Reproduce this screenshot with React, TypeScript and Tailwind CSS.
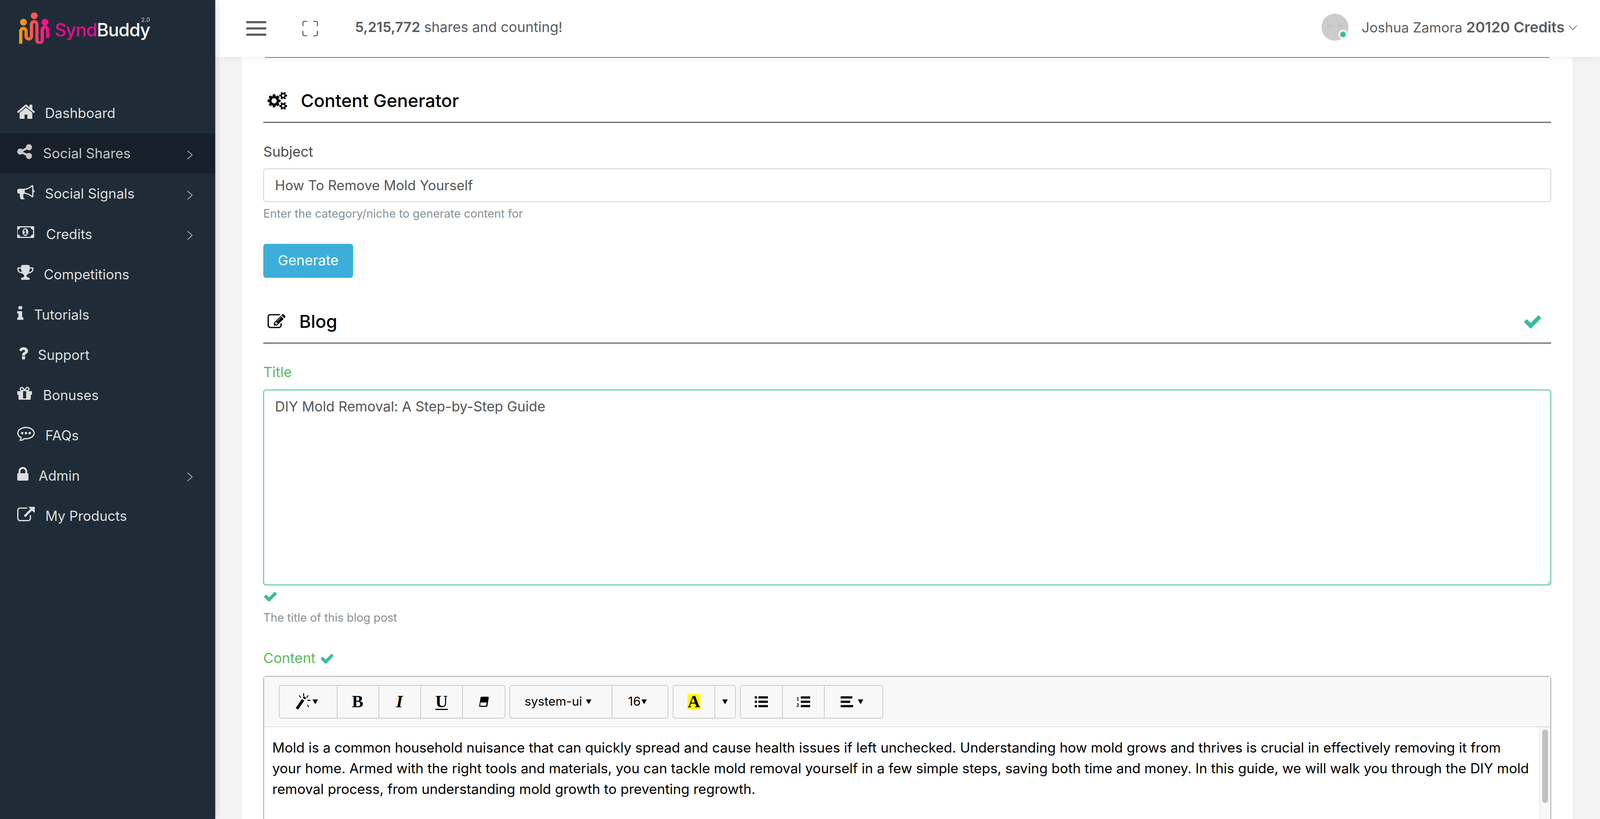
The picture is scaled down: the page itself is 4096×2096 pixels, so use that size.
import type { ReactNode } from "react";

const FONT = "font-['Inter','Liberation_Sans',sans-serif]";

const ICONS = {
  home: "M1472 992v480q0 26-19 45t-45 19h-384v-384h-256v384h-384q-26 0-45-19t-19-45v-480q0-1 .5-3t.5-3l575-474 575 474q1 2 1 6zm223-69l-62 74q-8 9-21 11h-3q-13 0-21-7l-692-577-692 577q-12 8-24 7-13-2-21-11l-62-74q-8-10-7-23.5t11-21.5l719-599q32-26 76-26t76 26l244 204v-195q0-14 9-23t23-9h192q14 0 23 9t9 23v408l219 182q10 8 11 21.5t-7 23.5z",
  share: "M1344 1024q133 0 226.5 93.5t93.5 226.5-93.5 226.5-226.5 93.5-226.5-93.5-93.5-226.5q0-12 2-34l-360-180q-92 86-218 86-133 0-226.5-93.5t-93.5-226.5 93.5-226.5 226.5-93.5q126 0 218 86l360-180q-2-22-2-34 0-133 93.5-226.5t226.5-93.5 226.5 93.5 93.5 226.5-93.5 226.5-226.5 93.5q-126 0-218-86l-360 180q2 22 2 34t-2 34l360 180q92-86 218-86z",
  bullhorn: "M1664 704q53 0 90.5 37.5t37.5 90.5-37.5 90.5-90.5 37.5v384q0 52-38 90t-90 38q-417-347-812-380-58 19-91 66t-31 100.5 40 92.5q-20 33-23 65.5t6 58 33.5 55 48 50 61.5 50.5q-29 58-111.5 83t-168.5 11.5-132-55.5q-7-23-29.5-87.5t-32-94.5-23-89-15-101 3.5-98.5 22-110.5h-122q-66 0-113-47t-47-113v-192q0-66 47-113t113-47h480q435 0 896-384 52 0 90 38t38 90v384zm-128 604v-954q-394 302-768 343v270q377 42 768 341z",
  money: "M704 1152h384v-96h-128v-448h-114l-148 137 77 80q42-37 55-57h2v288h-128v96zm512-256q0 70-21 142t-59.5 134-101.5 101-138 39-138-39-101.5-101-59.5-134-21-142 21-142 59.5-134 101.5-101 138-39 138 39 101.5 101 59.5 134 21 142zm512 256v-512q-106 0-181-75t-75-181h-1152q0 106-75 181t-181 75v512q106 0 181 75t75 181h1152q0-106 75-181t181-75zm128-832v1152q0 26-19 45t-45 19h-1792q-26 0-45-19t-19-45v-1152q0-26 19-45t45-19h1792q26 0 45 19t19 45z",
  trophy: "M522 883q-74-162-74-371h-256v96q0 78 94.5 162t235.5 113zm1078-275v-96h-256q0 209-74 371 141-29 235.5-113t94.5-162zm128-128v128q0 71-41.5 143t-112 130-173 97.5-215.5 44.5q-42 54-95 95-38 34-52.5 72.5t-14.5 89.5q0 54 30.5 91t97.5 37q75 0 133.5 45.5t58.5 114.5v64q0 14-9 23t-23 9h-832q-14 0-23-9t-9-23v-64q0-69 58.5-114.5t133.5-45.5q67 0 97.5-37t30.5-91q0-51-14.5-89.5t-52.5-72.5q-53-41-95-95-113-5-215.5-44.5t-173-97.5-112-130-41.5-143v-128q0-40 28-68t68-28h288v-96q0-66 47-113t113-47h576q66 0 113 47t47 113v96h288q40 0 68 28t28 68z",
  info: "M1216 1344v128q0 26-19 45t-45 19h-512q-26 0-45-19t-19-45v-128q0-26 19-45t45-19h64v-384h-64q-26 0-45-19t-19-45v-128q0-26 19-45t45-19h384q26 0 45 19t19 45v576h64q26 0 45 19t19 45zm-128-1152v192q0 26-19 45t-45 19h-256q-26 0-45-19t-19-45v-192q0-26 19-45t45-19h256q26 0 45 19t19 45z",
  question: "M1088 1256v240q0 16-12 28t-28 12h-240q-16 0-28-12t-12-28v-240q0-16 12-28t28-12h240q16 0 28 12t12 28zm316-600q0 54-15.5 101t-35 76.5-55 59.5-57.5 43.5-61 35.5q-41 23-68.5 65t-27.5 67q0 17-12 32.5t-28 15.5h-240q-15 0-25.5-18.5t-10.5-37.5v-45q0-83 65-156.5t143-108.5q59-27 84-56t25-76q0-42-46.5-74t-107.5-32q-65 0-108 29-35 25-107 115-13 16-31 16-12 0-25-8l-164-125q-13-10-15.5-25t5.5-28q160-266 464-266 80 0 161 31t146 83 106 127.5 41 158.5z",
  gift: "M1056 1356v-716h-320v716q0 25 18 38.5t46 13.5h192q28 0 46-13.5t18-38.5zm-456-844h195l-126-161q-26-31-69-31-40 0-68 28t-28 68 28 68 68 28zm688-96q0-40-28-68t-68-28q-43 0-69 31l-125 161h194q40 0 68-28t28-68zm376 256v320q0 14-9 23t-23 9h-96v416q0 40-28 68t-68 28h-1088q-40 0-68-28t-28-68v-416h-96q-14 0-23-9t-9-23v-320q0-14 9-23t23-9h440q-93 0-158.5-65.5t-65.5-158.5 65.5-158.5 158.5-65.5q107 0 168 77l128 165 128-165q61-77 168-77 93 0 158.5 65.5t65.5 158.5-65.5 158.5-158.5 65.5h440q14 0 23 9t9 23z",
  comment: "M640 896q0 53-37.5 90.5t-90.5 37.5-90.5-37.5-37.5-90.5 37.5-90.5 90.5-37.5 90.5 37.5 37.5 90.5zm384 0q0 53-37.5 90.5t-90.5 37.5-90.5-37.5-37.5-90.5 37.5-90.5 90.5-37.5 90.5 37.5 37.5 90.5zm384 0q0 53-37.5 90.5t-90.5 37.5-90.5-37.5-37.5-90.5 37.5-90.5 90.5-37.5 90.5 37.5 37.5 90.5zm-512-512q-204 0-381.5 69.5t-282 187.5-104.5 255q0 112 71.5 213.5t201.5 175.5l87 50-27 96q-24 91-70 172 152-63 275-171l43-38 57 6q69 8 130 8 204 0 381.5-69.5t282-187.5 104.5-255-104.5-255-282-187.5-381.5-69.5zm896 512q0 174-120 321.5t-326 233-450 85.5q-70 0-145-8-198 175-460 242-49 14-114 22h-5q-15 0-27-10.5t-16-27.5v-1q-3-4-.5-12t2-10 4.5-9.5l6-9 7-8.5 8-9q7-8 31-34.5t34.5-38 31-39.5 32.5-51 27-59 26-76q-157-89-247.5-220t-90.5-281q0-174 120-321.5t326-233 450-85.5 450 85.5 326 233 120 321.5z",
  lock: "M640 768h512v-192q0-106-75-181t-181-75-181 75-75 181v192zm832 96v576q0 40-28 68t-68 28h-960q-40 0-68-28t-28-68v-576q0-40 28-68t68-28h32v-192q0-184 132-316t316-132 316 132 132 316v192h32q40 0 68 28t28 68z",
  external: "M1408 928v320q0 119-84.5 203.5t-203.5 84.5h-832q-119 0-203.5-84.5t-84.5-203.5v-832q0-119 84.5-203.5t203.5-84.5h704q14 0 23 9t9 23v64q0 14-9 23t-23 9h-704q-66 0-113 47t-47 113v832q0 66 47 113t113 47h832q66 0 113-47t47-113v-320q0-14 9-23t23-9h64q14 0 23 9t9 23zm384-864v512q0 26-19 45t-45 19-45-19l-176-176-652 652q-10 10-23 10t-23-10l-114-114q-10-10-10-23t10-23l652-652-176-176q-19-19-19-45t19-45 45-19h512q26 0 45 19t19 45z",
  cogs: "M896 896q0-106-75-181t-181-75-181 75-75 181 75 181 181 75 181-75 75-181zm768 512q0-52-38-90t-90-38-90 38-38 90q0 53 37.5 90.5t90.5 37.5 90.5-37.5 37.5-90.5zm0-1024q0-52-38-90t-90-38-90 38-38 90q0 53 37.5 90.5t90.5 37.5 90.5-37.5 37.5-90.5zm-384 421v185q0 10-7 19.5t-16 10.5l-155 24q-11 35-32 76 34 48 90 115 7 11 7 20 0 12-7 19-23 30-82.5 89.5t-78.5 59.5q-11 0-21-7l-115-90q-37 19-77 31-11 108-23 155-7 24-30 24h-186q-11 0-20-7.5t-10-17.5l-23-153q-34-10-75-31l-118 89q-7 7-20 7-11 0-21-8-144-133-144-160 0-9 7-19 10-14 41-53t47-61q-23-44-35-82l-152-24q-10-1-17-9.5t-7-19.5v-185q0-10 7-19.5t16-10.5l155-24q11-35 32-76-34-48-90-115-7-11-7-19 0-12 7-20 22-30 82-89t79-59q11 0 21 7l115 90q34-18 77-32 11-108 23-154 7-24 30-24h186q11 0 20 7.5t10 17.5l23 153q34 10 75 31l118-89q8-7 20-7 11 0 21 8 144 133 144 160 0 8-7 19-12 16-42 54t-45 60q23 48 34 82l152 23q10 2 17 10.5t7 19.5zm640 533v140q0 16-149 31-12 27-30 52 51 113 51 138 0 4-4 7-122 71-124 71-8 0-46-47t-52-68q-20 2-30 2t-30-2q-14 21-52 68t-46 47q-2 0-124-71-4-3-4-7 0-25 51-138-18-25-30-52-149-15-149-31v-140q0-16 149-31 13-29 30-52-51-113-51-138 0-4 4-7 4-2 35-20t59-34 30-16q8 0 46 46.5t52 67.5q20-2 30-2t30 2q51-71 92-112l6-2q4 0 124 70 4 3 4 7 0 25-51 138 17 23 30 52 149 15 149 31zm0-1024v140q0 16-149 31-12 27-30 52 51 113 51 138 0 4-4 7-122 71-124 71-8 0-46-47t-52-68q-20 2-30 2t-30-2q-14 21-52 68t-46 47q-2 0-124-71-4-3-4-7 0-25 51-138-18-25-30-52-149-15-149-31v-140q0-16 149-31 13-29 30-52-51-113-51-138 0-4 4-7 4-2 35-20t59-34 30-16q8 0 46 46.5t52 67.5q20-2 30-2t30 2q51-71 92-112l6-2q4 0 124 70 4 3 4 7 0 25-51 138 17 23 30 52 149 15 149 31z",
  edit: "M888 1184l116-116-152-152-116 116v56h96v96h56zm440-720q-16-16-33 1l-350 350q-17 17-1 33t33-1l350-350q17-17 1-33zm80 594v190q0 119-84.5 203.5t-203.5 84.5h-832q-119 0-203.5-84.5t-84.5-203.5v-832q0-119 84.5-203.5t203.5-84.5h832q63 0 117 25 15 7 18 23 3 17-9 29l-49 49q-14 14-32 8-23-6-45-6h-832q-66 0-113 47t-47 113v832q0 66 47 113t113 47h832q66 0 113-47t47-113v-126q0-13 9-22l64-64q15-15 35-7t20 29zm-96-738l288 288-672 672h-288v-288zm444 132l-92 92-288-288 92-92q28-28 68-28t68 28l152 152q28 28 28 68t-28 68z",
  check: "M1671 566q0 40-28 68l-724 724-136 136q-28 28-68 28t-68-28l-136-136-362-362q-28-28-28-68t28-68l136-136q28-28 68-28t68 28l294 295 656-657q28-28 68-28t68 28l136 136q28 28 28 68z",
};

function Fa({ d, vb, className }: { d: string; vb: string; className: string }) {
  return (
    <svg viewBox={vb} className={className} preserveAspectRatio="xMidYMid meet" fill="currentColor">
      <path d={d} />
    </svg>
  );
}

function Chevron() {
  return (
    <svg viewBox="0 0 16 25" className="ml-auto mr-[57px] mt-[7px] h-[23px] w-[15px] text-[#d8d8d8]" fill="none" stroke="currentColor" strokeWidth="1.7">
      <path d="M1 1l13 11.5L1 24" />
    </svg>
  );
}

const NAV = [
  { label: "Dashboard", d: ICONS.home, vb: "96 224 1600 1312", box: "w-[71px]", size: "w-[45px] h-[37px]" },
  { label: "Social Shares", d: ICONS.share, vb: "128 128 1536 1536", box: "w-[66px]", size: "w-[38px] h-[38px]", arrow: true, active: true },
  { label: "Social Signals", d: ICONS.bullhorn, vb: "0 128 1792 1536", box: "w-[71px]", size: "w-[45px] h-[38px]", arrow: true },
  { label: "Credits", d: ICONS.money, vb: "0 256 2048 1280", box: "w-[74px]", size: "w-[48px] h-[32px]", arrow: true },
  { label: "Competitions", d: ICONS.trophy, vb: "64 128 1664 1536", box: "w-[68px]", size: "w-[42px] h-[38px]" },
  { label: "Tutorials", d: ICONS.info, vb: "576 128 640 1408", box: "w-[43px]", size: "w-[16px] h-[36px]" },
  { label: "Support", d: ICONS.question, vb: "384 256 1024 1280", box: "w-[53px] pl-[3px]", size: "w-[25px] h-[32px]" },
  { label: "Bonuses", d: ICONS.gift, vb: "128 192 1536 1344", box: "w-[66px]", size: "w-[38px] h-[33px]" },
  { label: "FAQs", d: ICONS.comment, vb: "0 256 1792 1408", box: "w-[72px]", size: "w-[45px] h-[36px]" },
  { label: "Admin", d: ICONS.lock, vb: "320 128 1152 1408", box: "w-[55px]", size: "w-[29px] h-[35px]", arrow: true },
  { label: "My Products", d: ICONS.external, vb: "0 64 1792 1472", box: "w-[72px]", size: "w-[45px] h-[37px]" },
];

function Logo() {
  return (
    <div className="flex h-[145.5px] items-center border-b border-[#1b2833] pl-[49px]">
      <svg viewBox="53 36 86 87" className="h-[80px] w-[79px] shrink-0">
        <defs>
          <linearGradient id="logoWave" x1="0" y1="0" x2="1" y2="0">
            <stop offset="0" stopColor="#ff9a00" />
            <stop offset="0.5" stopColor="#fb4a5c" />
            <stop offset="1" stopColor="#f10a90" />
          </linearGradient>
        </defs>
        <circle cx="65" cy="63" r="9.5" fill="#ff9410" />
        <circle cx="95" cy="45" r="9.5" fill="#fb5a4c" />
        <circle cx="125" cy="63" r="9.5" fill="#f5178a" />
        <path
          d="M57.5 123V88a7.5 7.5 0 0 1 15 0v14a7.5 7.5 0 0 0 15 0V69a7.5 7.5 0 0 1 15 0v44a7.5 7.5 0 0 0 15 0V84a7.5 7.5 0 0 1 15 0v23"
          fill="none"
          stroke="url(#logoWave)"
          strokeWidth="9"
        />
      </svg>
      <div className="relative ml-[12px] mt-[7px] text-[46px] font-medium leading-none tracking-[-1.1px]">
        <span className="text-[#ec0a8e]">Synd</span>
        <span className="text-white">Buddy</span>
        <span className="absolute bottom-[calc(100%-5px)] right-[0px] text-[15px] font-normal leading-none tracking-normal text-[#c9c9c9]">2.0</span>
      </div>
    </div>
  );
}

function Sidebar() {
  return (
    <aside className="z-20 flex h-full w-[550.7px] shrink-0 flex-col bg-[#1f2c38] shadow-[4px_0_14px_rgba(0,0,0,0.12)]">
      <Logo />
      <nav className="mt-[92.5px]">
        {NAV.map((item) => (
          <div
            key={item.label}
            className={`flex h-[103.1px] items-center pl-[44px] text-[35px] ${item.active ? "bg-[#172028] text-[#c6c6c6]" : "text-[#dedede]"}`}
          >
            <span className={`mb-[9px] flex shrink-0 ${item.box}`}>
              <Fa d={item.d} vb={item.vb} className={item.size} />
            </span>
            <span>{item.label}</span>
            {item.arrow && <Chevron />}
          </div>
        ))}
      </nav>
    </aside>
  );
}

function TopBar() {
  return (
    <header className="z-10 flex h-[145.5px] shrink-0 items-center bg-white pl-[79px] pr-[58px] text-[#585c60] shadow-[0_2px_16px_rgba(0,0,0,0.07)]">
      <svg viewBox="0 0 52 38" className="h-[38px] w-[52px]" fill="currentColor">
        <rect y="0" width="52" height="5.5" rx="2.7" />
        <rect y="16" width="52" height="5.5" rx="2.7" />
        <rect y="32" width="52" height="5.5" rx="2.7" />
      </svg>
      <svg viewBox="0 0 40 40" className="ml-[92px] h-[40px] w-[40px]" fill="none" stroke="currentColor" strokeWidth="2.6" strokeLinecap="round">
        <path d="M1.5 13V5a3.5 3.5 0 0 1 3.500-3.500h6M38.500 13V5a3.500 3.500 0 0 0-3.500-3.500h-6M1.500 27v8a3.500 3.500 0 0 0 3.500 3.500h6M38.500 27v8a3.500 3.500 0 0 1-3.500 3.500h-6" />
      </svg>
      <div className="mb-[5px] ml-[95px] text-[35.8px]">
        <b className="font-semibold">5,215,772</b> shares and counting!
      </div>
      <div className="mb-[6px] ml-auto flex items-center">
        <div className="relative flex h-[69px] w-[69px] items-center justify-center rounded-full bg-[#cccccc] text-[10px] text-[#b4b4b4]">
          <span className="mb-[4px]">114 x 113</span>
          <span className="absolute bottom-[4px] right-[2px] h-[24px] w-[24px] rounded-full border-[5px] border-[#eeeeee] bg-[#36bd9b]" />
        </div>
        <div className="ml-[34px] text-[35.2px]">
          Joshua Zamora <b className="text-[37.4px] font-semibold">20120 Credits</b>
        </div>
        <svg viewBox="0 0 24 15" className="ml-[10px] mt-[2px] h-[14px] w-[23px]" fill="none" stroke="currentColor" strokeWidth="1.7">
          <path d="M1 1l11 12L23 1" />
        </svg>
      </div>
    </header>
  );
}

function SectionTitle({ icon, title, right }: { icon: ReactNode; title: string; right?: ReactNode }) {
  return (
    <div className="flex h-[110px] items-center border-b-[2px] border-[#1f2c38] pl-[11px] pr-[26px] text-black">
      {icon}
      <h4 className="text-[45.7px] font-medium leading-none">{title}</h4>
      {right && <div className="ml-auto">{right}</div>}
    </div>
  );
}

function Caret({ className = "" }: { className?: string }) {
  return (
    <svg viewBox="0 0 16 16" className={`h-[14px] w-[14px] shrink-0 ${className}`} fill="#000">
      <path d="M0 1h16L8 15z" />
    </svg>
  );
}

function Cell({ children, className }: { children?: ReactNode; className: string }) {
  return <div className={`flex h-full items-center justify-center border-r-[2.5px] border-[#cccccc] last:border-r-0 ${className}`}>{children}</div>;
}

function Group({ children }: { children: ReactNode }) {
  return <div className="flex h-[86px] rounded-[7px] border-[2.5px] border-[#cccccc]">{children}</div>;
}

function Toolbar() {
  return (
    <div className="flex h-[129px] items-start gap-[10.5px] border-b-[2.5px] border-[#dddddd] bg-[#f8f8f8] pl-[38px] pt-[21px]">
      <Group>
        <Cell className="w-[148px] pr-[8px]">
          <svg viewBox="0 0 40 44" className="mr-[2px] h-[44px] w-[42px]" fill="#000">
            <path d="M0 38l16-23 6 4-16 23zM18 12l3-4 6 4-3 4z" />
            <rect x="19" y="0" width="2.500" height="8" />
            <rect x="30" y="17" width="8" height="2.500" />
            <path d="M8 6l2-1 4 6-2 1zM31 5l2 1-4 6-2-1zM29 30l2-1 3 6-2 1z" />
          </svg>
          <Caret />
        </Cell>
        <Cell className="w-[107px] pr-[2px] font-['Liberation_Serif',serif] text-[44px] font-bold text-black">B</Cell>
        <Cell className="w-[107px] pr-[2px] font-['Liberation_Serif',serif] text-[44px] font-bold italic text-black">I</Cell>
        <Cell className="w-[107px] font-['Liberation_Serif',serif] text-[44px] font-bold text-black underline decoration-[3px] underline-offset-[4px]">U</Cell>
        <Cell className="w-[107px]">
          <svg viewBox="0 0 28 30" className="h-[28px] w-[27px]">
            <path d="M8 1h17q3 0 2.500 3l-3.500 22q-.5 3-3.500 3H4q-3 0-2.500-3L5 4q.5-3 3-3z" fill="#000" />
            <path d="M5 17h17l-1.500 9H4z" fill="#f8f8f8" />
          </svg>
        </Cell>
      </Group>
      <Group>
        <Cell className="w-[262px] pr-[16px] text-[31.4px] text-black">
          system-ui
          <Caret className="ml-[10px]" />
        </Cell>
        <Cell className="w-[141px] pr-[14px] text-[31.4px] text-black">
          16
          <Caret className="ml-[2px]" />
        </Cell>
      </Group>
      <Group>
        <Cell className="w-[107px]">
          <span className="flex h-[39px] w-[33px] items-center justify-center bg-[#ffff00] font-['Liberation_Serif',serif] text-[44px] font-bold leading-none text-black">A</span>
        </Cell>
        <Cell className="w-[51px]">
          <Caret />
        </Cell>
      </Group>
      <Group>
        <Cell className="w-[108px]">
          <svg viewBox="0 0 36 30" className="h-[28px] w-[34px]" fill="#000">
            <rect x="0" y="0" width="6" height="6" />
            <rect x="10" y="0" width="26" height="6" />
            <rect x="0" y="12" width="6" height="6" />
            <rect x="10" y="12" width="26" height="6" />
            <rect x="0" y="24" width="6" height="6" />
            <rect x="10" y="24" width="26" height="6" />
          </svg>
        </Cell>
        <Cell className="w-[107px]">
          <svg viewBox="0 0 38 30" className="h-[28px] w-[35px]" fill="#000">
            <text x="0" y="12" fontSize="13" fontFamily="Liberation Sans" fontWeight="700">1</text>
            <text x="0" y="29" fontSize="13" fontFamily="Liberation Sans" fontWeight="700">2</text>
            <rect x="12" y="0" width="26" height="6" />
            <rect x="12" y="12" width="26" height="6" />
            <rect x="12" y="24" width="26" height="6" />
          </svg>
        </Cell>
        <Cell className="w-[148px] pr-[8px]">
          <svg viewBox="0 0 34 30" className="h-[28px] w-[32px]" fill="#000">
            <rect x="0" y="0" width="32" height="6" />
            <rect x="0" y="12" width="26" height="6" />
            <rect x="0" y="24" width="34" height="6" />
          </svg>
          <Caret className="ml-[12px]" />
        </Cell>
      </Group>
    </div>
  );
}

function Editor() {
  return (
    <div className="h-[600px] rounded-t-[7px] border-[2.5px] border-b-0 border-[#a9a9a9]">
      <Toolbar />
      <div className="flex h-[500px]">
        <div className="min-w-0 flex-1 overflow-hidden pl-[21px] pt-[26px] text-[35.15px] leading-[53.4px] text-black">
          <div className="whitespace-nowrap">Mold is a common household nuisance that can quickly spread and cause health issues if left unchecked. Understanding how mold grows and thrives is crucial in effectively removing it from</div>
          <div className="whitespace-nowrap">your home. Armed with the right tools and materials, you can tackle mold removal yourself in a few simple steps, saving both time and money. In this guide, we will walk you through the DIY mold</div>
          <div className="whitespace-nowrap">removal process, from understanding mold growth to preventing regrowth.</div>
        </div>
        <div className="w-[28px] shrink-0 border-l-[2.5px] border-[#e8e8e8] bg-[#f8f8f8] pl-[5px] pt-[6px]">
          <div className="h-[188px] w-[15px] rounded-full bg-[#c1c1c1]" />
        </div>
      </div>
    </div>
  );
}

export default function App() {
  return (
    <div className={`flex h-[2096px] w-[4096px] overflow-hidden bg-[#f3f3f3] ${FONT}`}>
      <Sidebar />
      <div className="flex min-w-0 flex-1 flex-col">
        <TopBar />
        <main className="ml-[68.3px] mr-[70px] flex-1 bg-white px-[55px]">
          <div className="mx-[4px] h-[2px] bg-[#8c70d6]" />
          <div className="mt-[56px]">
            <SectionTitle
              icon={<Fa d={ICONS.cogs} vb="0 64 1920 1664" className="mr-[35px] h-[44px] w-[50px]" />}
              title="Content Generator"
            />
          </div>

          <label className="mt-[49px] block text-[35.8px] leading-[51px] text-[#474c4f]">Subject</label>
          <input
            readOnly
            value="How To Remove Mold Yourself"
            className="mt-[17px] block h-[86.5px] w-full rounded-[7px] border-[2.5px] border-[#d4d4d4] bg-white px-[28px] text-[35px] text-[#555555] outline-none"
          />
          <p className="mt-[10px] text-[29.2px] leading-[40px] text-[#868e96]">Enter the category/niche to generate content for</p>
          <button className="mt-[57px] flex h-[86.5px] w-[230px] items-center justify-center rounded-[7px] bg-[#3bafda] text-[35.8px] leading-none text-white">Generate</button>

          <div className="mt-[58px]">
            <SectionTitle
              icon={<Fa d={ICONS.edit} vb="0 160 1792 1408" className="mr-[35px] h-[37px] w-[46px]" />}
              title="Blog"
              right={<Fa d={ICONS.check} vb="120 300 1552 1194" className="h-[34px] w-[43px] text-[#36bd9b]" />}
            />
          </div>

          <label className="mt-[48px] block text-[35.8px] leading-[51px] text-[#5cb85c]">Title</label>
          <textarea
            readOnly
            value="DIY Mold Removal: A Step-by-Step Guide"
            className="mt-[19px] block h-[501px] w-full rounded-[7px] border-[2.5px] border-[#36bd9b] bg-white px-[28px] pt-[16px] text-[35.4px] leading-[51px] text-[#555555] outline-none"
          />
          <Fa d={ICONS.check} vb="120 300 1552 1194" className="ml-[2px] mt-[16px] h-[25px] w-[33px] text-[#36bd9b]" />
          <p className="mt-[22px] text-[29.2px] leading-[40px] text-[#868e96]">The title of this blog post</p>

          <div className="mt-[59px] flex h-[51px] items-center text-[35.8px] text-[#5cb85c]">
            Content
            <Fa d={ICONS.check} vb="120 300 1552 1194" className="ml-[13px] h-[25px] w-[33px] text-[#36bd9b]" />
          </div>
          <div className="mt-[19px]">
            <Editor />
          </div>
        </main>
      </div>
    </div>
  );
}
